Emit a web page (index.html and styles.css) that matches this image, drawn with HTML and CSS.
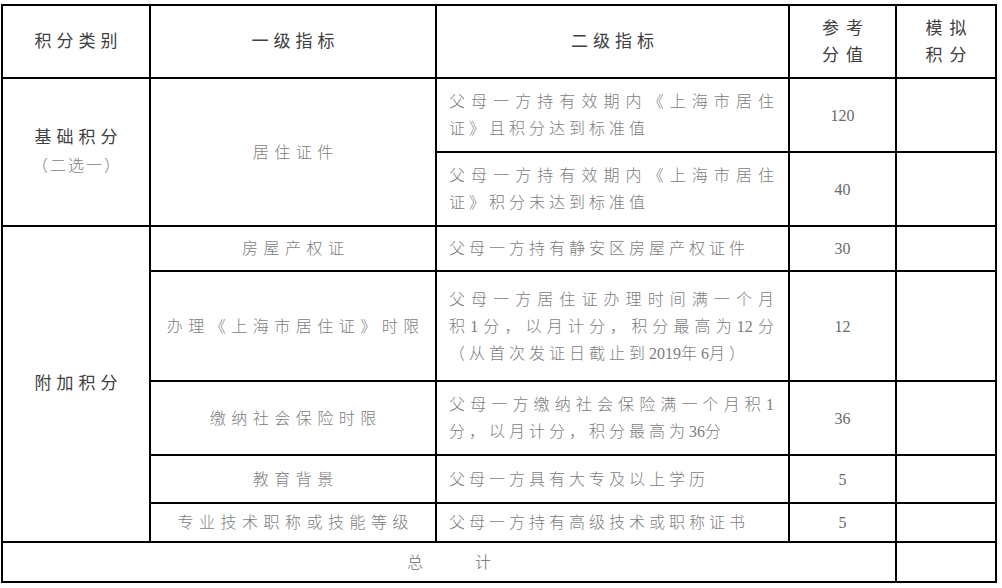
FILE: index.html
```html
<!DOCTYPE html>
<html lang="zh-CN">
<head>
<meta charset="utf-8">
<title>积分表</title>
<link rel="stylesheet" href="styles.css">
</head>
<body>
<table class="score-table">
  <colgroup>
    <col class="c-cat">
    <col class="c-lv1">
    <col class="c-lv2">
    <col class="c-ref">
    <col class="c-sim">
  </colgroup>
  <thead>
    <tr class="r-head">
      <th class="head sp">积分类别</th>
      <th class="head sp">一级指标</th>
      <th class="head sp">二级指标</th>
      <th class="head sp2">参考<br>分值</th>
      <th class="head sp2">模拟<br>积分</th>
    </tr>
  </thead>
  <tbody>
    <tr class="r1">
      <td class="cat" rowspan="2"><div class="cat-main">基础积分</div><div class="cat-sub">（二选一）</div></td>
      <td class="lv1" rowspan="2">居住证件</td>
      <td class="lv2"><span class="full">父母一方持有效期内《上海市居住</span><span>证》且积分达到标准值</span></td>
      <td class="num">120</td>
      <td></td>
    </tr>
    <tr class="r2">
      <td class="lv2"><span class="full">父母一方持有效期内《上海市居住</span><span>证》积分未达到标准值</span></td>
      <td class="num">40</td>
      <td></td>
    </tr>
    <tr class="r3">
      <td class="cat" rowspan="5"><div class="cat-main">附加积分</div></td>
      <td class="lv1">房屋产权证</td>
      <td class="lv2"><span>父母一方持有静安区房屋产权证件</span></td>
      <td class="num">30</td>
      <td></td>
    </tr>
    <tr class="r4">
      <td class="lv1">办理《上海市居住证》时限</td>
      <td class="lv2"><span class="full">父母一方居住证办理时间满一个月</span><span class="full">积1分，以月计分，积分最高为12分</span><span>（从首次发证日截止到<i class="d">2019</i>年<i class="d">6</i>月）</span></td>
      <td class="num">12</td>
      <td></td>
    </tr>
    <tr class="r5">
      <td class="lv1">缴纳社会保险时限</td>
      <td class="lv2"><span class="full">父母一方缴纳社会保险满一个月积1</span><span>分，以月计分，积分最高为<i class="d">36</i>分</span></td>
      <td class="num">36</td>
      <td></td>
    </tr>
    <tr class="r6">
      <td class="lv1">教育背景</td>
      <td class="lv2"><span>父母一方具有大专及以上学历</span></td>
      <td class="num">5</td>
      <td></td>
    </tr>
    <tr class="r7">
      <td class="lv1">专业技术职称或技能等级</td>
      <td class="lv2"><span>父母一方持有高级技术或职称证书</span></td>
      <td class="num">5</td>
      <td></td>
    </tr>
    <tr class="r8">
      <td class="total" colspan="4">总计</td>
      <td></td>
    </tr>
  </tbody>
</table>
</body>
</html>
```

FILE: styles.css
```css
html, body {
  margin: 0;
  padding: 0;
  background: #ffffff;
}

body {
  font-family: "Liberation Serif", "Noto Sans CJK SC", serif;
  color: #7d7d7d;
}

.score-table {
  margin: 4px 0 0 1px;
  border-collapse: collapse;
  table-layout: fixed;
  width: 996px;
}

.c-cat { width: 148px; }
.c-lv1 { width: 286px; }
.c-lv2 { width: 353px; }
.c-ref { width: 107px; }
.c-sim { width: 100px; }

.score-table th,
.score-table td {
  border: 2px solid #000;
  padding: 0;
  text-align: center;
  vertical-align: middle;
  font-size: 16px;
  line-height: 27px;
  font-weight: 300;
}

.r-head { height: 73px; }
.r1 { height: 74px; }
.r2 { height: 74px; }
.r3 { height: 45px; }
.r4 { height: 110px; }
.r5 { height: 74px; }
.r6 { height: 48px; }
.r7 { height: 39px; }
.r8 { height: 40px; }

.score-table .head {
  color: #404040;
  font-size: 17px;
  font-weight: 400;
}

.sp {
  letter-spacing: 5px;
  padding-left: 5px !important;
}

.sp2 {
  letter-spacing: 7px;
  padding-left: 7px !important;
}

.score-table .cat {
  color: #404040;
  font-size: 17px;
  font-weight: 400;
}

.cat-main {
  letter-spacing: 5px;
  padding-left: 5px;
  font-size: 17px;
  line-height: 28px;
}

.cat-sub {
  color: #7d7d7d;
  font-size: 16px;
  font-weight: 300;
  line-height: 28px;
  letter-spacing: 2px;
  padding-left: 2px;
}

.lv1 {
  letter-spacing: 5.5px;
  padding-left: 5.5px !important;
}

.score-table .lv2 {
  text-align: left;
  padding: 0 14px 0 12px;
  letter-spacing: 4px;
}

.lv2 span {
  display: block;
  line-height: 27px;
}

.lv2 .full {
  text-align: justify;
  text-align-last: justify;
  letter-spacing: 0;
}

.d {
  font-style: normal;
  letter-spacing: 0;
}

.num {
  color: #6a6a6a;
  font-size: 17px;
}

.score-table .total {
  color: #6a6a6a;
  letter-spacing: 52px;
  padding-left: 52px;
}
```
